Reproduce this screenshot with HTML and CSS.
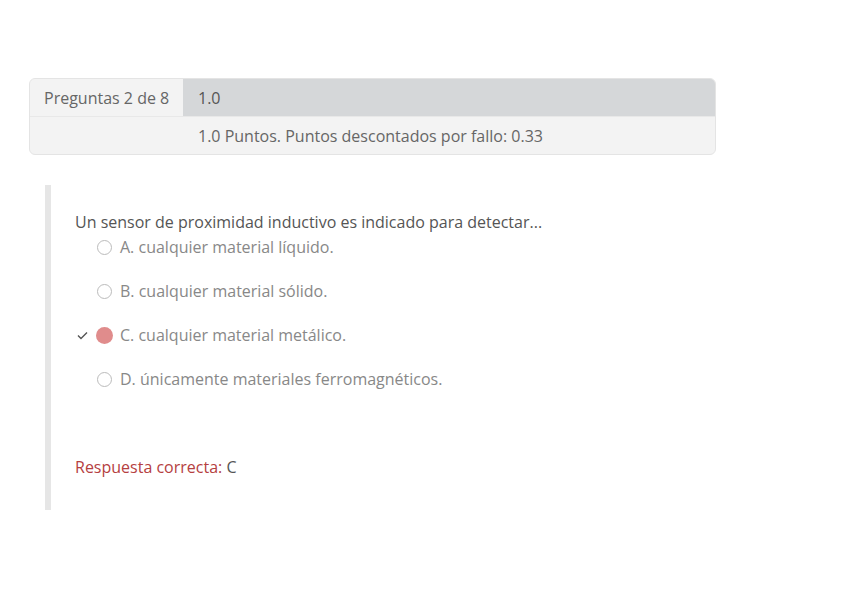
FILE: index.html
```html
<!DOCTYPE html>
<html lang="es">
<head>
  <meta charset="UTF-8">
  <title>Pregunta 2</title>
  <link rel="stylesheet" href="styles.css">
</head>
<body>
  <div class="page">
    <div class="info">
      <div class="info-row">
        <div class="info-label">Preguntas 2 de 8</div>
        <div class="info-grade">1.0</div>
      </div>
      <div class="info-row">
        <div class="info-label"></div>
        <div class="info-points">1.0 Puntos. Puntos descontados por fallo: 0.33</div>
      </div>
    </div>

    <div class="question">
      <p class="qtext">Un sensor de proximidad inductivo es indicado para detectar...</p>
      <ul class="answers">
        <li class="answer"><span class="mark"></span><span class="radio"></span>A. cualquier material líquido.</li>
        <li class="answer"><span class="mark"></span><span class="radio"></span>B. cualquier material sólido.</li>
        <li class="answer chosen"><span class="mark">
          <svg width="11" height="9" viewBox="0 0 11 9"><path d="M1 4.5 L4 7.5 L10 1.5" fill="none" stroke="#555" stroke-width="1.4"/></svg>
        </span><span class="radio"></span>C. cualquier material metálico.</li>
        <li class="answer"><span class="mark"></span><span class="radio"></span>D. únicamente materiales ferromagnéticos.</li>
      </ul>
      <p class="right-answer"><span class="label">Respuesta correcta:</span> C</p>
    </div>
  </div>
</body>
</html>
```

FILE: styles.css
```css
body {
  margin: 0;
  font-family: "Open Sans", sans-serif;
  font-size: 16px;
  color: #333;
  background-color: #fff;
}
.page {
  padding: 78px 132px 0 29px;
}
.info {
  border: 1px solid #e4e4e4;
  border-radius: 6px;
  overflow: hidden;
  background-color: #f3f3f3;
}
.info-row {
  display: flex;
  height: 37px;
  align-items: stretch;
}
.info-row + .info-row {
  border-top: 1px solid #e8e8e8;
}
.info-label {
  width: 139px;
  padding-left: 14px;
  display: flex;
  align-items: center;
  color: #666;
}
.info-grade {
  flex: 1;
  background-color: #d5d7d9;
  padding-left: 15px;
  display: flex;
  align-items: center;
  color: #555;
}
.info-points {
  flex: 1;
  padding-left: 15px;
  display: flex;
  align-items: center;
  color: #666;
}
.question {
  margin: 30px 0 0 16px;
  border-left: 6px solid #e6e6e6;
  padding: 26px 0 32px 24px;
}
.qtext {
  margin: 0;
  height: 22px;
  line-height: 22px;
  color: #555;
}
.answers {
  list-style: none;
  margin: 3px 0 0;
  padding: 0;
}
.answer {
  display: flex;
  align-items: center;
  height: 22px;
  margin-bottom: 22px;
  color: #888;
}
.mark {
  width: 20px;
  display: flex;
  align-items: center;
  padding-left: 2px;
}
.radio {
  width: 15px;
  height: 15px;
  border: 1px solid #bbb;
  border-radius: 50%;
  margin-right: 8px;
  box-sizing: border-box;
}
.chosen .radio {
  border: none;
  width: 17px;
  height: 17px;
  margin-right: 7px;
  margin-left: -1px;
  background-color: #e08c8c;
}
.right-answer {
  margin: 66px 0 0;
  height: 22px;
  line-height: 22px;
  color: #555;
}
.right-answer .label {
  color: #b5403f;
}
```
